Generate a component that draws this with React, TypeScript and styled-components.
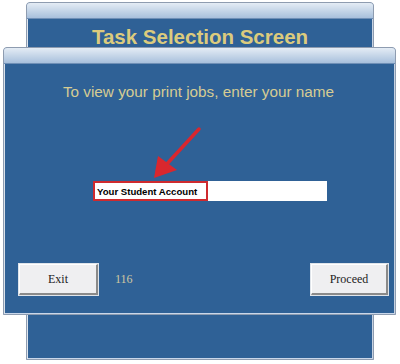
import React from "react";
import styled, { createGlobalStyle } from "styled-components";

const Global = createGlobalStyle`
  html, body { margin: 0; padding: 0; background: #ffffff; }
  body { width: 400px; height: 364px; overflow: hidden; font-family: "Liberation Sans", Arial, sans-serif; }
`;

const Stage = styled.div`
  position: relative;
  width: 400px;
  height: 364px;
  display: grid;
  grid-template-columns: 400px;
  grid-template-rows: 364px;
`;

const Window = styled.div<{ $left: number; $top: number; $w: number; $h: number }>`
  grid-area: 1 / 1;
  margin-left: ${(p) => p.$left}px;
  margin-top: ${(p) => p.$top}px;
  width: ${(p) => p.$w}px;
  height: ${(p) => p.$h}px;
  box-sizing: border-box;
  display: flex;
  flex-direction: column;
  border: 1px solid #8e9cb0;
  border-radius: 4px 4px 0 0;
  background: #2f6196;
  box-shadow: inset 1px 0 0 #dfe6ef, inset -1px 0 0 #c6d2e2, inset 0 -1px 0 #c9d7ea;
  overflow: hidden;
`;

const TitleBar = styled.div`
  height: 15px;
  flex: none;
  background: linear-gradient(#e4ecf5, #c3d4e7 55%, #a8c0dc);
  border-bottom: 1px solid #6f8fb6;
`;

const Body = styled.div`
  flex: 1;
  display: flex;
  flex-direction: column;
  border-left: 1px solid #d9e1ea;
`;

const Heading = styled.h1`
  margin: 6px 0 0;
  text-align: center;
  font-family: "Liberation Sans", Arial, sans-serif;
  font-weight: bold;
  font-size: 20.5px;
  line-height: 24px;
  color: #dccb7d;
`;

const Prompt = styled.p`
  margin: 19px 3px 0 0;
  text-align: center;
  font-family: "Liberation Sans", Arial, sans-serif;
  font-size: 15.3px;
  line-height: 18px;
  color: #d6cc93;
`;

const InputRow = styled.div`
  margin: 80px 0 0 88px;
  width: 234px;
  height: 20px;
  background: #ffffff;
  display: flex;
`;

const Highlight = styled.div`
  box-sizing: border-box;
  width: 115px;
  height: 20px;
  border: 2px solid #cf2a2e;
  display: flex;
  align-items: center;
  padding-left: 2px;
  font-family: "Liberation Sans", Arial, sans-serif;
  font-weight: bold;
  font-size: 9.6px;
  color: #000;
  white-space: nowrap;
`;

const ButtonRow = styled.div`
  margin-top: auto;
  margin-bottom: 19px;
  padding: 0 7px 0 14px;
  display: flex;
  align-items: center;
`;

const Button = styled.button<{ $w: number }>`
  box-sizing: border-box;
  width: ${(p) => p.$w}px;
  height: 31px;
  background: #efeff1;
  border: none;
  border-top: 1px solid #ffffff;
  border-left: 1px solid #ffffff;
  border-right: 2px solid #8a8a8a;
  border-bottom: 2px solid #8a8a8a;
  outline: 1px solid #dfe4ea;
  font-family: "Liberation Serif", "Times New Roman", serif;
  font-size: 12px;
  color: #222;
  padding: 0;
`;

const Counter = styled.span`
  margin-left: 17px;
  font-family: "Liberation Serif", "Times New Roman", serif;
  font-size: 12px;
  color: #cfc8a2;
`;

const Spacer = styled.div`
  flex: 1;
`;

const Arrow = styled.svg`
  position: absolute;
  left: 0;
  top: 0;
  pointer-events: none;
`;

export default function App() {
  return (
    <>
      <Global />
      <Stage>
        <Window $left={26} $top={2} $w={348} $h={358}>
          <TitleBar />
          <Heading>Task Selection Screen</Heading>
        </Window>
        <Window $left={3} $top={47} $w={393} $h={268}>
          <TitleBar />
          <Body>
            <Prompt>To view your print jobs, enter your name</Prompt>
            <InputRow>
              <Highlight>Your Student Account</Highlight>
            </InputRow>
            <ButtonRow>
              <Button $w={79}>Exit</Button>
              <Counter>116</Counter>
              <Spacer />
              <Button $w={77}>Proceed</Button>
            </ButtonRow>
          </Body>
        </Window>
        <Arrow width="400" height="364" viewBox="0 0 400 364">
          <line x1="199" y1="129" x2="165" y2="166" stroke="#d9272e" strokeWidth="3.5" strokeLinecap="round" />
          <polygon points="154,178 158,156 177,170" fill="#d9272e" />
        </Arrow>
      </Stage>
    </>
  );
}
